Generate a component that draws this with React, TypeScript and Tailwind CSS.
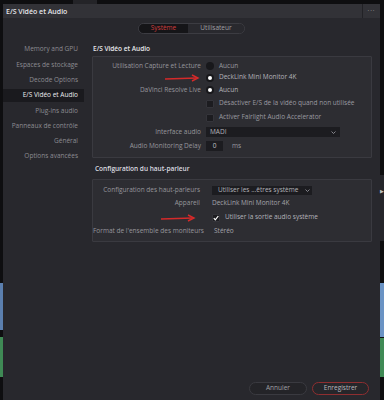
import React from 'react';

const font = { fontFamily: '"Open Sans", "Noto Sans", sans-serif' };

const sidebar = [
  'Memory and GPU',
  'Espaces de stockage',
  'Decode Options',
  'E/S Vidéo et Audio',
  'Plug-ins audio',
  'Panneaux de contrôle',
  'Général',
  'Options avancées',
];

const Radio = ({ on }: { on?: boolean }) => (
  <span className="w-[8px] h-[8px] rounded-full bg-[#18181b] flex items-center justify-center shrink-0">
    {on && <span className="w-[4px] h-[4px] rounded-full bg-white" />}
  </span>
);

const Check = ({ on }: { on?: boolean }) => (
  <span className="w-[8px] h-[8px] rounded-[1px] bg-[#1c1c20] border border-[#34343a] flex items-center justify-center shrink-0">
    {on && (
      <svg width="6" height="6" viewBox="0 0 6 6">
        <path d="M0.8 3.2 L2.3 4.8 L5.3 1" stroke="#fff" strokeWidth="1.2" fill="none" />
      </svg>
    )}
  </span>
);

const Chevron = () => (
  <svg width="5" height="3" viewBox="0 0 5 3">
    <path d="M0.5 0.5 L2.5 2.5 L4.5 0.5" stroke="#a0a0a6" strokeWidth="0.8" fill="none" />
  </svg>
);

const Row1 = ({ h, label, children }: { h: string; label?: string; children: React.ReactNode }) => (
  <div className={`flex items-center ${h}`}>
    <div className="w-[108px] text-right text-[#96969c] whitespace-nowrap">{label}</div>
    <div className="flex items-center pl-[5px] flex-1">{children}</div>
  </div>
);

const Row2 = ({ h, label, children }: { h: string; label?: string; children: React.ReactNode }) => (
  <div className={`flex items-center ${h}`}>
    <div className="w-[107px] text-right text-[#96969c] whitespace-nowrap">{label}</div>
    <div className="flex items-center flex-1">{children}</div>
  </div>
);

const Arrow = ({ className }: { className: string }) => (
  <svg className={`absolute ${className}`} width="36" height="8" viewBox="0 0 36 8">
    <path d="M1 5 L33 4" stroke="#d42a2a" strokeWidth="1.4" fill="none" />
    <path d="M28 1 L34 4 L28 7" stroke="#d42a2a" strokeWidth="1.4" fill="none" />
  </svg>
);

export default function App() {
  return (
    <div className="w-[384px] h-[400px] bg-[#0e0e10] flex flex-col overflow-hidden relative text-[6.5px] leading-none" style={font}>
      <div className="h-[4px] flex">
        <div className="ml-[73px] w-[24px] bg-[#242428]" />
      </div>
      <div className="flex flex-1">
        {/* left edge of window behind */}
        <div className="w-[3px] flex flex-col">
          <div className="h-[279px]" />
          <div className="h-[47px] bg-[#5b7fae]" />
          <div className="h-[7px]" />
          <div className="h-[40px] bg-[#3f8a55]" />
        </div>

        {/* dialog */}
        <div className="w-[377px] bg-[#28282d] flex flex-col">
          <div className="h-[14px] bg-[#323237] flex items-center">
            <div className="flex-1 pl-[3px] text-[7px] font-semibold text-[#e6e6ea]">E/S Vidéo et Audio</div>
            <div className="w-px h-full bg-[#222226]" />
            <div className="w-[17px] text-center text-[#8a8a90] tracking-[1px] -mt-[3px]">...</div>
          </div>

          <div className="flex justify-center pt-[5px]">
            <div className="flex h-[11px] rounded-full border border-[#3c3c42] overflow-hidden">
              <div className="w-[49px] bg-[#151518] text-[#d23c3c] flex items-center justify-center">Système</div>
              <div className="w-[56px] bg-[#29292e] text-[#a0a0a6] flex items-center justify-center">Utilisateur</div>
            </div>
          </div>

          <div className="flex flex-1 pt-[8px]">
            <div className="w-[81px] flex flex-col">
              {sidebar.map((s) => (
                <div key={s} className="h-[15.3px] flex items-center">
                  <div
                    className={`w-full h-[13px] flex items-center justify-end pr-[6px] whitespace-nowrap ${
                      s === 'E/S Vidéo et Audio' ? 'bg-[#1a1a1e] text-[#ececf0]' : 'text-[#8c8c92]'
                    }`}
                  >
                    {s}
                  </div>
                </div>
              ))}
            </div>

            <div className="flex-1 pl-[8px] pr-[8px] flex flex-col relative">
              <div className="h-[14px] flex items-center text-[#e8e8ec] font-semibold pl-[1px]">E/S Vidéo et Audio</div>
              <div className="border border-[#3a3a40] bg-[#2d2d32] rounded-[1px] pt-[3px] pb-[4px]">
                <Row1 h="h-[12px]" label="Utilisation Capture et Lecture">
                  <Radio />
                  <span className="ml-[5px] text-[#9a9aa0]">Aucun</span>
                </Row1>
                <Row1 h="h-[11px]">
                  <Radio on />
                  <span className="ml-[5px] text-[#b4b4ba]">DeckLink Mini Monitor 4K</span>
                </Row1>
                <Row1 h="h-[14px]" label="DaVinci Resolve Live">
                  <Radio on />
                  <span className="ml-[5px] text-[#b4b4ba]">Aucun</span>
                </Row1>
                <Row1 h="h-[13px]">
                  <Check />
                  <span className="ml-[5px] text-[#9a9aa0]">Désactiver E/S de la vidéo quand non utilisée</span>
                </Row1>
                <Row1 h="h-[15px]">
                  <Check />
                  <span className="ml-[5px] text-[#9a9aa0]">Activer Fairlight Audio Accelerator</span>
                </Row1>
                <Row1 h="h-[14px]" label="Interface audio">
                  <div className="w-[134px] h-[10px] bg-[#1c1c20] flex items-center justify-between px-[4px]">
                    <span className="text-[#b4b4ba]">MADI</span>
                    <Chevron />
                  </div>
                </Row1>
                <Row1 h="h-[14px]" label="Audio Monitoring Delay">
                  <div className="w-[17px] h-[10px] bg-[#1c1c20] flex items-center justify-center text-[#c0c0c6]">0</div>
                  <span className="ml-[9px] text-[#9a9aa0]">ms</span>
                </Row1>
              </div>

              <div className="h-[21px] flex items-center pt-[2px] pl-[3px] text-[#dcdce0] font-semibold">Configuration du haut-parleur</div>

              <div className="border border-[#3a3a40] bg-[#2d2d32] rounded-[1px] pt-[3px] pb-[3px]">
                <Row2 h="h-[14px]" label="Configuration des haut-parleurs">
                  <div className="ml-[12px] w-[100px] h-[9px] bg-[#1c1c20] flex items-center pl-[6px] gap-[7px]">
                    <span className="text-[#b4b4ba] whitespace-nowrap">Utiliser les ...êtres système</span>
                    <Chevron />
                  </div>
                </Row2>
                <Row2 h="h-[13px]" label="Appareil">
                  <span className="ml-[12px] text-[#a4a4aa]">DeckLink Mini Monitor 4K</span>
                </Row2>
                <Row2 h="h-[15px]">
                  <span className="ml-[12px]"><Check on /></span>
                  <span className="ml-[5px] text-[#b4b4ba]">Utiliser la sortie audio système</span>
                </Row2>
                <Row2 h="h-[13px]" label="Format de l'ensemble des moniteurs">
                  <span className="ml-[14px] text-[#a4a4aa]">Stéréo</span>
                </Row2>
              </div>

              <div className="flex-1" />
              <div className="flex justify-end gap-[5px] pb-[5px] pr-[3px]">
                <div className="w-[58px] h-[13px] rounded-full border border-[#3a3a40] bg-[#242428] flex items-center justify-center text-[#a0a0a6]">Annuler</div>
                <div className="w-[57px] h-[13px] rounded-full border border-[#8e2e30] bg-[#26262a] flex items-center justify-center text-[#b8b8be]">Enregistrer</div>
              </div>

              <Arrow className="left-[80px] top-[32px]" />
              <Arrow className="left-[76px] top-[172px]" />
            </div>
          </div>
        </div>

        {/* right edge of window behind */}
        <div className="w-[4px] flex flex-col">
          <div className="h-[171px]" />
          <div className="h-[66px] bg-[#25252a] flex flex-col">
            <div className="h-[14px]" />
            <div className="text-[5px] text-[#c0c0c0]">▶</div>
          </div>
          <div className="h-[42px]" />
          <div className="h-[54px] bg-[#6a93c4]" />
          <div className="h-[1px]" />
          <div className="h-[39px] bg-[#3f8a55]" />
        </div>
      </div>
    </div>
  );
}
